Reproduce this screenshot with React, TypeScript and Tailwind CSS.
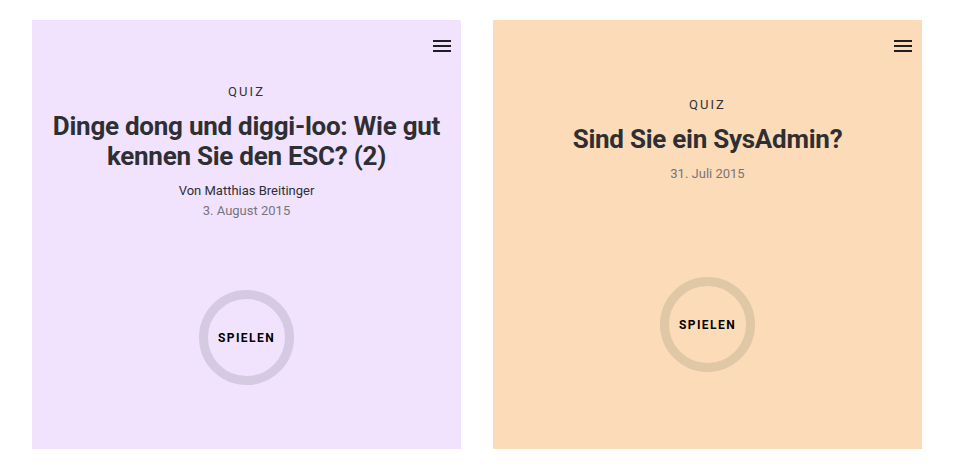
import React from 'react';

type CardProps = {
  bg: string;
  ring: string;
  title: string;
  author?: string;
  date: string;
  circleGap: string;
};

function MenuIcon() {
  return (
    <svg width="18" height="12" viewBox="0 0 18 12" className="text-[#1f1f22]">
      <rect x="0" y="0" width="18" height="2" fill="currentColor" />
      <rect x="0" y="5" width="18" height="2" fill="currentColor" />
      <rect x="0" y="10" width="18" height="2" fill="currentColor" />
    </svg>
  );
}

function QuizCard({ bg, ring, title, author, date, circleGap }: CardProps) {
  return (
    <div className={`relative flex h-[429px] w-[429px] flex-col items-center justify-center px-5 ${bg}`}>
      <button type="button" className="absolute right-[10px] top-[20px]" aria-label="Menü">
        <MenuIcon />
      </button>
      <div className="flex flex-col items-center text-center">
        <div className="text-[13px] leading-[16px] tracking-[0.16em] text-[#333336]">QUIZ</div>
        <h2 className="mt-[11px] text-[26px] font-bold leading-[30px] tracking-[-0.01em] text-[#2f2f33]">{title}</h2>
        {author && <div className="mt-[11px] text-[13px] leading-[18px] text-[#2f2f33]">{author}</div>}
        <div className={`text-[13px] leading-[18px] text-[#77757a] ${author ? 'mt-[2px]' : 'mt-[11px]'}`}>{date}</div>
      </div>
      <button
        type="button"
        className={`flex h-[95px] w-[95px] items-center justify-center rounded-full border-[9px] ${ring} ${circleGap}`}
      >
        <span className="text-[12px] font-bold tracking-[0.12em] text-black">SPIELEN</span>
      </button>
    </div>
  );
}

export default function App() {
  return (
    <div className="flex gap-8 bg-white pl-8 pt-5 font-['Roboto',sans-serif]" style={{ height: 469 }}>
      <QuizCard
        bg="bg-[#f1e3fe]"
        ring="border-[#d6c9e2]"
        title="Dinge dong und diggi-loo: Wie gut kennen Sie den ESC? (2)"
        author="Von Matthias Breitinger"
        date="3. August 2015"
        circleGap="mt-[70px]"
      />
      <QuizCard
        bg="bg-[#fcdcb8]"
        ring="border-[#e0c7a6]"
        title="Sind Sie ein SysAdmin?"
        date="31. Juli 2015"
        circleGap="mt-[94px]"
      />
    </div>
  );
}
